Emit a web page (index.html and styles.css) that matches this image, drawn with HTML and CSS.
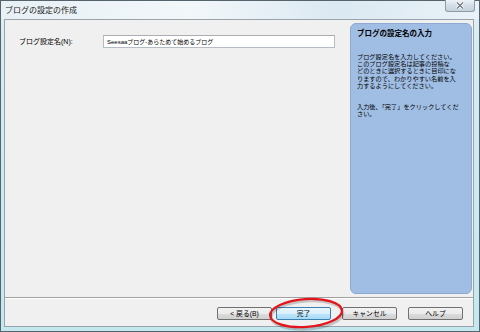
FILE: index.html
```html
<!DOCTYPE html>
<html lang="ja">
<head>
  <meta charset="UTF-8">
  <title>ブログの設定の作成</title>
  <link rel="stylesheet" href="styles.css">
</head>
<body>
  <div class="window">
    <div class="titlebar">
      <span class="title">ブログの設定の作成</span>
      <div class="close">
        <svg width="12" height="9" viewBox="0 0 12 9">
          <path d="M3 1.5 L9 7.5 M9 1.5 L3 7.5" stroke="#ffffff" stroke-width="3" fill="none"/>
          <path d="M3 1.5 L9 7.5 M9 1.5 L3 7.5" stroke="#6d7780" stroke-width="1.3" fill="none"/>
        </svg>
      </div>
    </div>

    <div class="client">
      <div class="main">
        <div class="form">
          <div class="row">
            <label for="blogName">ブログ設定名(N):</label>
            <input type="text" id="blogName" value="Seesaaブログ-あらためて始めるブログ">
          </div>
        </div>

        <div class="help-panel">
          <h3>ブログの設定名の入力</h3>
          <p>ブログ設定名を入力してください。<br>このブログ設定名は記事の投稿な<br>どのときに選択するときに目印にな<br>りますので、わかりやすい名前を入<br>力するようにしてください。</p>
          <p>入力後、「完了」をクリックしてくだ<br>さい。</p>
        </div>
      </div>

      <div class="footer">
        <button class="btn">&lt; 戻る(B)</button>
        <button class="btn btn-default">完了</button>
        <button class="btn btn-gap">キャンセル</button>
        <button class="btn btn-gap">ヘルプ</button>

        <!-- red marker drawn round the finish button -->
        <svg class="marker" width="80" height="36" viewBox="0 0 80 36">
          <ellipse cx="40" cy="19" rx="36" ry="14" fill="none" stroke="rgba(0,0,0,0.18)" stroke-width="3" transform="rotate(-4 40 19)"/>
          <ellipse cx="39" cy="17" rx="36" ry="14" fill="none" stroke="#e3141c" stroke-width="2.2" transform="rotate(-4 39 17)"/>
        </svg>
      </div>
    </div>
  </div>
</body>
</html>
```

FILE: styles.css
```css
body { margin: 0; width: 480px; height: 332px; overflow: hidden; font-family: "Liberation Sans", "Noto Sans CJK JP", sans-serif; color: #000; }

.window { box-sizing: border-box; width: 480px; height: 332px; border: 1px solid #55636c; background: linear-gradient(to bottom, #e6f0f6 0, #d6ecf3 40px, #c4e8ef 100%); display: flex; flex-direction: column; }

.titlebar { height: 18px; flex: none; display: flex; align-items: center; justify-content: space-between; background: linear-gradient(to right, #e7f0f5, #f2f7fa 40%, #dbe9f2 70%, #e9f2f7); }
.title { font-size: 8px; line-height: 10px; padding-left: 4px; padding-top: 1px; color: #1b1b1b; }
.close { align-self: flex-start; width: 30px; height: 12px; margin-right: 4px; margin-top: -1px; box-sizing: border-box; border: 1px solid #8e9aa6; border-top: none; border-radius: 0 0 3px 3px; background: linear-gradient(to bottom, #eef3f8, #d3dde8 50%, #c4d1de); display: flex; align-items: center; justify-content: center; }

.client { flex: none; height: 308px; margin: 0 5px 0 3px; box-sizing: border-box; border: 1px solid #9aa3aa; background: #f0f0f0; display: flex; flex-direction: column; }

.main { height: 278px; box-sizing: border-box; padding: 3px 1px 3px 14px; border-bottom: 1px solid #a0a0a0; display: flex; }
.form { flex: 1; padding-top: 12px; }
.row { display: flex; align-items: center; }
.row label { width: 84px; font-size: 7px; line-height: 13px; }
.row input { width: 232px; height: 13px; box-sizing: border-box; margin: 0; padding: 0 3px; border: 1px solid #b5bcc6; border-top-color: #abadb3; background: #fff; font-family: inherit; font-size: 6px; color: #000; outline: none; }

.help-panel { width: 122px; box-sizing: border-box; border: 1px solid #8ea9d4; border-radius: 6px; background: #a0bee4; padding: 5px 4px 0 6px; white-space: nowrap; }
.help-panel h3 { margin: 0; font-size: 7.5px; line-height: 9px; font-weight: 700; }
.help-panel p { margin: 14px 0 0; font-size: 6.2px; line-height: 7.2px; }
.help-panel h3 + p { margin-top: 15px; }

.footer { position: relative; flex: 1; border-top: 1px solid #fff; padding: 8px 0 0 212px; display: flex; align-items: flex-start; gap: 4px; }
.btn { width: 55px; height: 13px; box-sizing: border-box; margin: 0; padding: 0; border: 1px solid #707070; border-radius: 2px; background: linear-gradient(to bottom, #f2f2f2 0, #ebebeb 50%, #dddddd 51%, #cfcfcf 100%); font-family: inherit; font-size: 6.8px; line-height: 11px; color: #000; }
.btn-default { border-color: #3c7fb1; background: linear-gradient(to bottom, #eaf6fd 0, #d9f0fc 50%, #bee6fd 51%, #a7d9f5 100%); }
.btn-gap { margin-left: 7px; }
.marker { position: absolute; left: 262px; top: -3px; }
```
